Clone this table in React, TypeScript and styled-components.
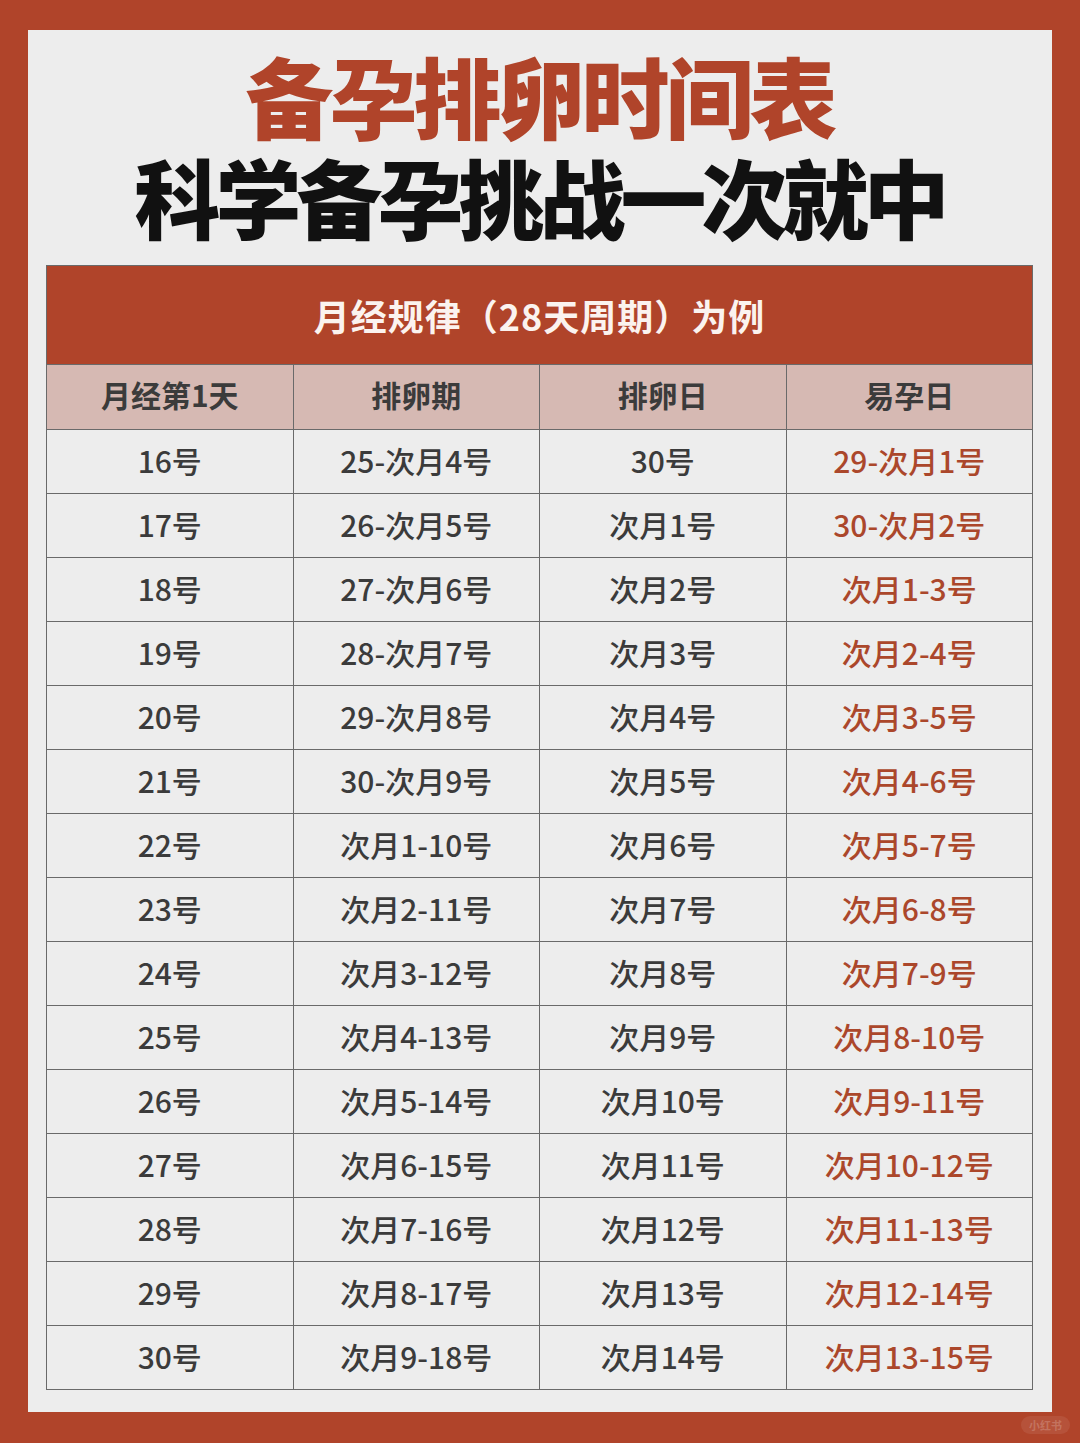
import * as React from 'react';
import styled, { createGlobalStyle } from 'styled-components';

const COLORS = {
  brick: '#b0442a',
  card: '#ededed',
  ink: '#111111',
  text: '#3b3b3b',
  accent: '#ab472b',
  headRow: '#d6b9b3',
  line: '#6a6a6a',
};

const FONT = '"Noto Sans CJK SC", "Noto Sans", sans-serif';

type Row = [string, string, string, string];

const rows: Row[] = [
  ['16号', '25-次月4号', '30号', '29-次月1号'],
  ['17号', '26-次月5号', '次月1号', '30-次月2号'],
  ['18号', '27-次月6号', '次月2号', '次月1-3号'],
  ['19号', '28-次月7号', '次月3号', '次月2-4号'],
  ['20号', '29-次月8号', '次月4号', '次月3-5号'],
  ['21号', '30-次月9号', '次月5号', '次月4-6号'],
  ['22号', '次月1-10号', '次月6号', '次月5-7号'],
  ['23号', '次月2-11号', '次月7号', '次月6-8号'],
  ['24号', '次月3-12号', '次月8号', '次月7-9号'],
  ['25号', '次月4-13号', '次月9号', '次月8-10号'],
  ['26号', '次月5-14号', '次月10号', '次月9-11号'],
  ['27号', '次月6-15号', '次月11号', '次月10-12号'],
  ['28号', '次月7-16号', '次月12号', '次月11-13号'],
  ['29号', '次月8-17号', '次月13号', '次月12-14号'],
  ['30号', '次月9-18号', '次月14号', '次月13-15号'],
];

const columns = ['月经第1天', '排卵期', '排卵日', '易孕日'];

const App = () => (
  <>
    <GlobalStyle />
    <Page>
      <Card>
        <Title>备孕排卵时间表</Title>
        <Subtitle>科学备孕挑战一次就中</Subtitle>
        <Table>
          <thead>
            <tr>
              <Banner colSpan={4}>月经规律（28天周期）为例</Banner>
            </tr>
            <tr>
              {columns.map((c) => (
                <HeadCell key={c}>{c}</HeadCell>
              ))}
            </tr>
          </thead>
          <tbody>
            {rows.map((r) => (
              <tr key={r[0]}>
                {r.map((v, i) => (
                  <Cell key={i} $accent={i === 3}>
                    {v}
                  </Cell>
                ))}
              </tr>
            ))}
          </tbody>
        </Table>
      </Card>
      <Watermark>小红书</Watermark>
    </Page>
  </>
);

const GlobalStyle = createGlobalStyle`
  html, body {
    margin: 0;
    padding: 0;
    background: ${COLORS.brick};
  }
`;

const Page = styled.div`
  position: relative;
  width: 1080px;
  height: 1443px;
  box-sizing: border-box;
  padding: 30px 28px 31px 28px;
  background: ${COLORS.brick};
  font-family: ${FONT};
`;

const Card = styled.div`
  background: ${COLORS.card};
  height: 100%;
  box-sizing: border-box;
  padding: 14px 19px 0 18px;
  display: flex;
  flex-direction: column;
  align-items: center;
`;

const Title = styled.h1`
  margin: 0;
  font-size: 88px;
  line-height: 100px;
  font-weight: 900;
  letter-spacing: -4px;
  color: ${COLORS.brick};
`;

const Subtitle = styled.h2`
  margin: 0;
  font-size: 86px;
  line-height: 104px;
  font-weight: 900;
  letter-spacing: -5px;
  color: ${COLORS.ink};
`;

const Table = styled.table`
  margin-top: 17px;
  width: 100%;
  border-collapse: collapse;
  table-layout: fixed;
  border: 1.5px solid ${COLORS.line};
`;

const Banner = styled.th`
  height: 98px;
  padding: 0;
  background: ${COLORS.brick};
  color: #fbf3ef;
  font-size: 36px;
  font-weight: 700;
  letter-spacing: 1px;
  text-align: center;
  border: 1.5px solid ${COLORS.line};
`;

const HeadCell = styled.th`
  height: 57px;
  padding: 0 0 7px;
  background: ${COLORS.headRow};
  color: ${COLORS.text};
  font-size: 30px;
  font-weight: 700;
  text-align: center;
  border: 1.5px solid ${COLORS.line};
`;

const Cell = styled.td<{ $accent?: boolean }>`
  height: 60px;
  padding: 0 0 3px;
  text-align: center;
  font-size: 30px;
  font-weight: 500;
  color: ${(p) => (p.$accent ? COLORS.accent : COLORS.text)};
  border: 1.5px solid ${COLORS.line};
`;

const Watermark = styled.div`
  position: absolute;
  right: 10px;
  bottom: 9px;
  padding: 1px 8px;
  border-radius: 10px;
  background: rgba(255, 255, 255, 0.08);
  color: rgba(255, 255, 255, 0.2);
  font-size: 11px;
  font-weight: 700;
`;

export default App;
